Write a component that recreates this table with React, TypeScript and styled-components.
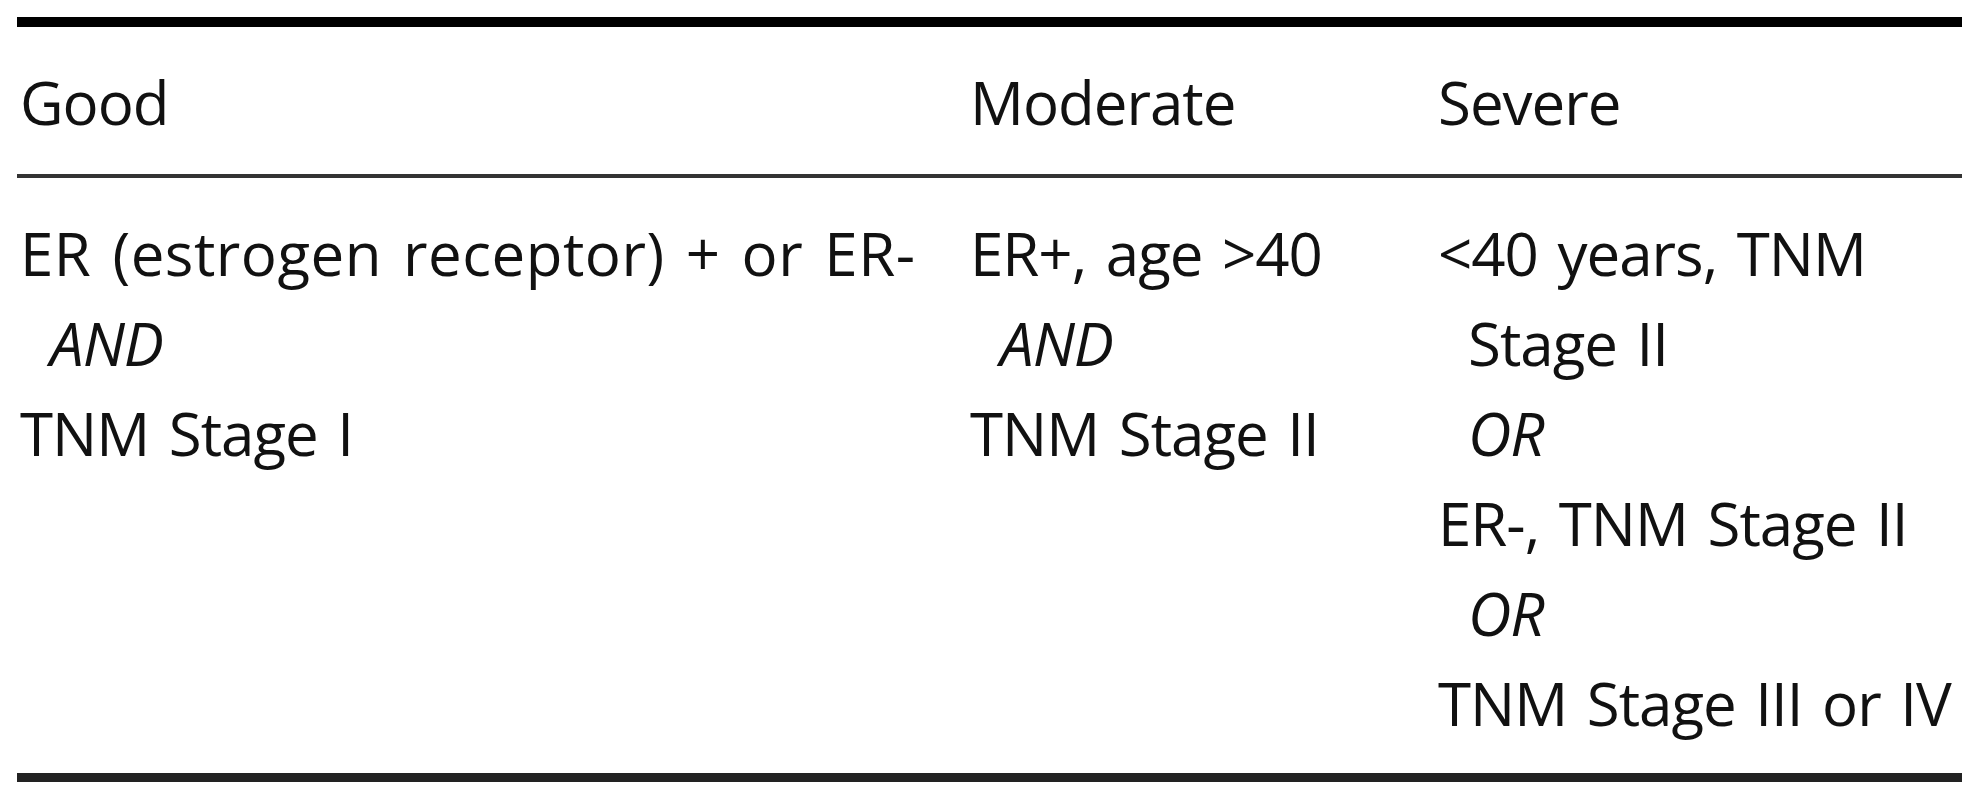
import React from "react";
import styled, { createGlobalStyle } from "styled-components";

const Global = createGlobalStyle`
  html, body { margin: 0; padding: 0; background: #ffffff; }
  body { font-family: "Open Sans", "Noto Sans", sans-serif; color: #111111; }
`;

const Page = styled.div`
  padding: 17px 13px 0 17px;
  width: 1945px;
`;

const Table = styled.div`
  width: 1945px;
  border-top: 10px solid #000000;
  border-bottom: 9px solid #222222;
`;

const Row = styled.div<{ $head?: boolean }>`
  display: grid;
  grid-template-columns: 950px 468px 527px;
  padding: ${(p) => (p.$head ? "30px 0 27px" : "30px 0 25px")};
  border-bottom: ${(p) => (p.$head ? "4px solid #333333" : "none")};
`;

const Cell = styled.div`
  padding-left: 3px;
  display: flex;
  flex-direction: column;
`;

const Line = styled.div<{ $indent?: boolean; $italic?: boolean; $track?: string }>`
  font-size: 60px;
  line-height: 90px;
  height: 90px;
  letter-spacing: ${(p) => p.$track ?? "-1px"};
  word-spacing: 5px;
  white-space: nowrap;
  padding-left: ${(p) => (p.$indent ? "30px" : "0")};
  font-style: ${(p) => (p.$italic ? "italic" : "normal")};
`;

type L = { text: string; indent?: boolean; italic?: boolean; track?: string };

const columns: L[][] = [
  [
    { text: "ER (estrogen receptor) + or ER-", track: "0.5px" },
    { text: "AND", indent: true, italic: true },
    { text: "TNM Stage I" },
  ],
  [
    { text: "ER+, age >40" },
    { text: "AND", indent: true, italic: true },
    { text: "TNM Stage II" },
  ],
  [
    { text: "<40 years, TNM" },
    { text: "Stage II", indent: true },
    { text: "OR", indent: true, italic: true },
    { text: "ER-, TNM Stage II" },
    { text: "OR", indent: true, italic: true },
    { text: "TNM Stage III or IV" },
  ],
];

const heads = ["Good", "Moderate", "Severe"];

export default function App() {
  return (
    <>
      <Global />
      <Page>
        <Table>
          <Row $head>
            {heads.map((h) => (
              <Cell key={h}>
                <Line>{h}</Line>
              </Cell>
            ))}
          </Row>
          <Row>
            {columns.map((col, i) => (
              <Cell key={i}>
                {col.map((l, j) => (
                  <Line key={j} $indent={l.indent} $italic={l.italic} $track={l.track}>
                    {l.text}
                  </Line>
                ))}
              </Cell>
            ))}
          </Row>
        </Table>
      </Page>
    </>
  );
}
